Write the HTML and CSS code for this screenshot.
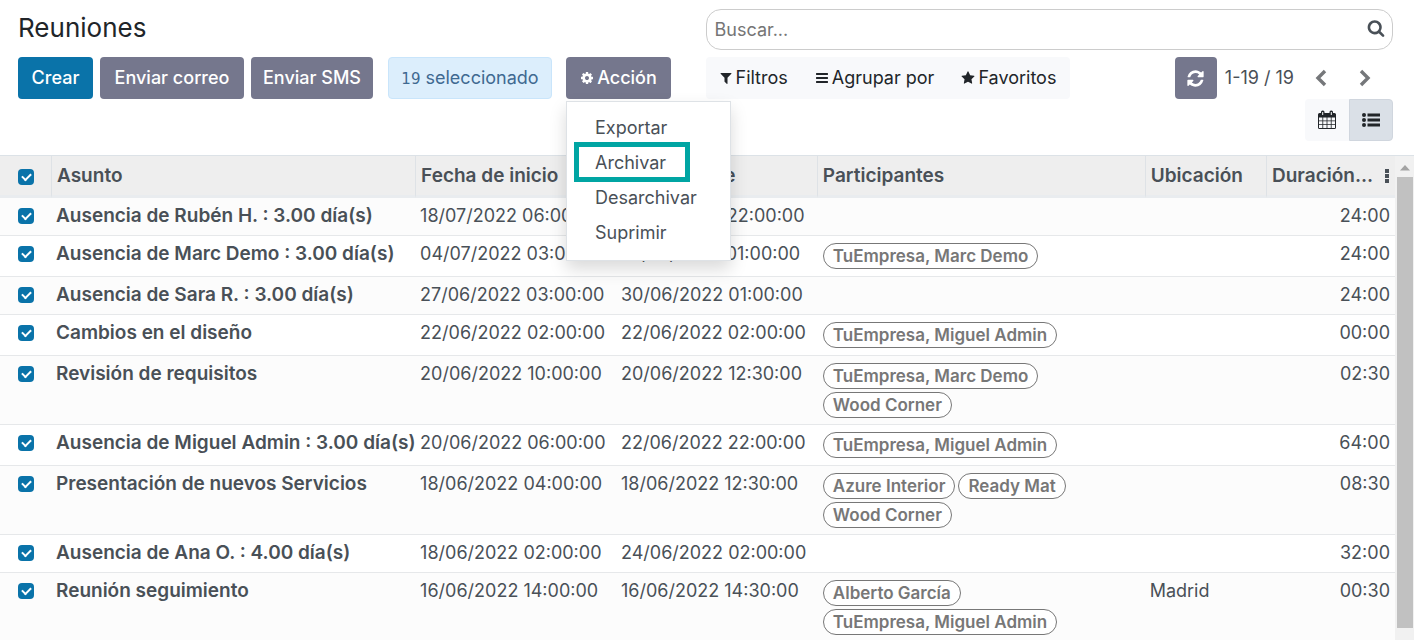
FILE: index.html
```
<!DOCTYPE html>
<html lang="es">
<head>
<meta charset="utf-8">
<meta name="viewport" content="width=device-width, initial-scale=1">
<title>Reuniones</title>
<link rel="stylesheet" href="styles.css">
</head>
<body>
<header class="control-panel">
  <div class="panel-left">
    <h1 class="title">Reuniones</h1>
    <div class="actions">
      <button class="btn btn-primary btn-create" type="button">Crear</button>
      <button class="btn btn-secondary btn-mail" type="button">Enviar correo</button>
      <button class="btn btn-secondary btn-sms" type="button">Enviar SMS</button>
      <span class="selection"><span class="selection-count">19</span> seleccionado</span>
      <div class="dropdown">
        <button class="btn btn-secondary btn-action" type="button" aria-expanded="true">
          <svg class="icon-small" viewBox="0 0 1792 1792" aria-hidden="true"><path fill="currentColor" d="M1152 896q0-106-75-181t-181-75-181 75-75 181 75 181 181 75 181-75 75-181zm512-109v222q0 12-8 23t-20 13l-185 28q-19 54-39 91 35 50 107 138 10 12 10 25t-9 23q-27 37-99 108t-94 71q-12 0-26-9l-138-108q-44 23-91 38-16 136-29 186-7 28-36 28H785q-14 0-24.500-8.500T749 1634l-28-184q-49-16-90-37l-141 107q-10 9-25 9-14 0-25-11-126-114-165-168-7-10-7-23 0-12 8-23 15-21 51-66.500t54-70.500q-27-50-41-99l-183-27q-13-2-21-12.500t-8-23.500V783q0-12 8-23t19-13l186-28q14-46 39-92-40-57-107-138-10-12-10-24 0-10 9-23 26-36 98.500-107.500T465 263q13 0 26 10l138 107q44-23 91-38 16-136 29-186 7-28 36-28h222q14 0 24.500 8.500T1043 158l28 184q49 16 90 37l142-107q9-9 24-9 13 0 25 10 129 119 165 170 7 8 7 22 0 12-8 23-15 21-51 66.500t-54 70.500q26 50 41 98l183 28q13 2 21 12.500t8 23.500z"/></svg>
          Acción
        </button>
        <div class="menu">
          <button class="menu-item" type="button">Exportar</button>
          <button class="menu-item menu-item-marked" type="button">Archivar</button>
          <button class="menu-item" type="button">Desarchivar</button>
          <button class="menu-item" type="button">Suprimir</button>
        </div>
      </div>
    </div>
  </div>
  <div class="panel-right">
    <div class="search">
      <input class="search-input" type="text" placeholder="Buscar..." aria-label="Buscar">
      <svg class="search-icon" viewBox="0 0 1792 1792" aria-hidden="true"><path fill="currentColor" d="M1216 832q0-185-131.500-316.500T768 384 451.500 515.500 320 832t131.500 316.500T768 1280t316.500-131.500T1216 832zm512 832q0 52-38 90t-90 38q-54 0-90-38l-343-342q-179 124-399 124-143 0-273.500-55.500t-225-150-150-225T64 832t55.500-273.500 150-225 225-150T768 128t273.500 55.500 225 150 150 225T1472 832q0 220-124 399l343 343q37 37 37 90z"/></svg>
    </div>
    <div class="tools">
      <div class="filters">
        <button class="filter" type="button">
          <svg class="icon-small" viewBox="0 0 1792 1792" aria-hidden="true"><path fill="currentColor" d="M1595 295q17 41-14 70l-493 493v742q0 42-39 59-13 5-25 5-27 0-45-19l-256-256q-19-19-19-45V858L211 365q-31-29-14-70 17-39 59-39h1280q42 0 59 39z"/></svg>
          Filtros
        </button>
        <button class="filter" type="button">
          <svg class="icon-small" viewBox="0 0 1792 1792" aria-hidden="true"><path fill="currentColor" d="M1664 1344v128q0 26-19 45t-45 19H192q-26 0-45-19t-19-45v-128q0-26 19-45t45-19h1408q26 0 45 19t19 45zm0-512v128q0 26-19 45t-45 19H192q-26 0-45-19t-19-45V832q0-26 19-45t45-19h1408q26 0 45 19t19 45zm0-512v128q0 26-19 45t-45 19H192q-26 0-45-19t-19-45V320q0-26 19-45t45-19h1408q26 0 45 19t19 45z"/></svg>
          Agrupar por
        </button>
        <button class="filter" type="button">
          <svg class="icon-small" viewBox="0 0 1792 1792" aria-hidden="true"><path fill="currentColor" d="M1728 647q0 22-26 48l-363 354 86 500q1 7 1 20 0 21-10.500 35.500T1385 1619q-19 0-40-12l-449-236-449 236q-22 12-40 12-21 0-31.500-14.500T365 1569q0-6 2-20l86-500L89 695q-25-27-25-48 0-37 56-46l502-73L847 73q19-41 49-41t49 41l225 455 502 73q56 9 56 46z"/></svg>
          Favoritos
        </button>
      </div>
      <div class="paging">
        <button class="btn btn-secondary btn-refresh" type="button" aria-label="Actualizar">
          <svg class="icon-refresh" viewBox="0 0 1792 1792" aria-hidden="true"><path fill="currentColor" d="M1639 1056q0 5-1 7-64 268-268 434.500T892 1664q-146 0-282.500-55T366 1452l-129 129q-19 19-45 19t-45-19-19-45v-448q0-26 19-45t45-19h448q26 0 45 19t19 45-19 45l-137 137q71 66 161 102t187 36q134 0 250-65t186-179q11-17 53-117 8-23 30-23h192q13 0 22.500 9.500t9.500 22.500zm25-800v448q0 26-19 45t-45 19h-448q-26 0-45-19t-19-45 19-45l138-138Q1097 384 896 384q-134 0-250 65T460 628q-11 17-53 117-8 23-30 23H178q-13 0-22.500-9.500T146 736v-7q65-268 270-434.500T896 128q146 0 284 55.500T1425 340l130-129q19-19 45-19t45 19 19 45z"/></svg>
        </button>
        <span class="range">1-19 / 19</span>
        <button class="page-btn" type="button" aria-label="Anterior"><svg class="icon-chevron" viewBox="0 0 18 18" aria-hidden="true"><path d="M13 2 6 9l7 7" fill="none" stroke="currentColor" stroke-width="3.400"/></svg></button>
        <button class="page-btn" type="button" aria-label="Siguiente"><svg class="icon-chevron" viewBox="0 0 18 18" aria-hidden="true"><path d="m5 2 7 7-7 7" fill="none" stroke="currentColor" stroke-width="3.400"/></svg></button>
      </div>
    </div>
    <div class="views">
      <button class="view view-calendar" type="button" aria-label="Calendario">
        <svg class="icon-view" viewBox="0 0 20 20" aria-hidden="true"><path fill="currentColor" fill-rule="evenodd" d="M2.500 3H4V2a1.500 1.500 0 0 1 1.500-1.500h.5A1.500 1.500 0 0 1 7.500 2v1h5V2A1.500 1.500 0 0 1 14 .5h.5A1.500 1.500 0 0 1 16 2v1h1.500A1.500 1.500 0 0 1 19 4.500v13A1.500 1.500 0 0 1 17.500 19h-15A1.500 1.500 0 0 1 1 17.500v-13A1.500 1.500 0 0 1 2.500 3zM5.200 2v3h1V2zm8.600 0v3h1V2zM2 7.500v3h3.400v-3zm4.200 0v3h3.400v-3zm4.200 0v3h3.400v-3zm4.200 0v3H18v-3zM2 11.300v2.900h3.400v-2.900zm4.200 0v2.900h3.400v-2.900zm4.200 0v2.900h3.400v-2.900zm4.200 0v2.900H18v-2.900zM2 15v3h3.400v-3zm4.200 0v3h3.400v-3zm4.200 0v3h3.400v-3zm4.200 0v3H18v-3z"/></svg>
      </button>
      <button class="view view-list" type="button" aria-label="Lista" aria-pressed="true">
        <svg class="icon-view" viewBox="0 0 20 20" aria-hidden="true"><g fill="currentColor"><circle cx="3" cy="5" r="2"/><circle cx="3" cy="10" r="2"/><circle cx="3" cy="15" r="2"/><path d="M6.500 3.500H19v3H6.500zM6.500 8.500H19v3H6.500zM6.500 13.500H19v3H6.500z"/></g></svg>
      </button>
    </div>
  </div>
</header>

<main class="content">
  <div class="table-wrap">
    <table class="list">
      <colgroup><col class="col-check"><col class="col-subject"><col class="col-start"><col class="col-end"><col class="col-people"><col class="col-place"><col class="col-duration"></colgroup>
      <thead>
        <tr>
          <th class="check-cell"><input class="check" type="checkbox" checked aria-label="Seleccionar todo"></th>
          <th>Asunto</th>
          <th>Fecha de inicio</th>
          <th>Fecha cierre</th>
          <th>Participantes</th>
          <th>Ubicación</th>
          <th><div class="duration-head"><span>Duración...</span><button class="options" type="button" aria-label="Columnas opcionales"><svg class="icon-dots" viewBox="0 0 4 16" aria-hidden="true"><path fill="currentColor" d="M0 1h4v4H0zM0 6h4v4H0zM0 11h4v4H0z"/></svg></button></div></th>
        </tr>
      </thead>
      <tbody>
        <tr>
          <td class="check-cell"><input class="check" type="checkbox" checked aria-label="Ausencia de Rubén H."></td>
          <td class="subject">Ausencia de Rubén H. : 3.00 día(s)</td><td>18/07/2022 06:00:00</td><td>20/07/2022 22:00:00</td><td></td><td></td><td class="duration">24:00</td>
        </tr>
        <tr>
          <td class="check-cell"><input class="check" type="checkbox" checked aria-label="Ausencia de Marc Demo"></td>
          <td class="subject">Ausencia de Marc Demo : 3.00 día(s)</td><td>04/07/2022 03:00:00</td><td>07/07/2022 01:00:00</td>
          <td><div class="tags"><span class="tag">TuEmpresa, Marc Demo</span></div></td><td></td><td class="duration">24:00</td>
        </tr>
        <tr>
          <td class="check-cell"><input class="check" type="checkbox" checked aria-label="Ausencia de Sara R."></td>
          <td class="subject">Ausencia de Sara R. : 3.00 día(s)</td><td>27/06/2022 03:00:00</td><td>30/06/2022 01:00:00</td><td></td><td></td><td class="duration">24:00</td>
        </tr>
        <tr>
          <td class="check-cell"><input class="check" type="checkbox" checked aria-label="Cambios en el diseño"></td>
          <td class="subject">Cambios en el diseño</td><td>22/06/2022 02:00:00</td><td>22/06/2022 02:00:00</td>
          <td><div class="tags"><span class="tag">TuEmpresa, Miguel Admin</span></div></td><td></td><td class="duration">00:00</td>
        </tr>
        <tr>
          <td class="check-cell"><input class="check" type="checkbox" checked aria-label="Revisión de requisitos"></td>
          <td class="subject">Revisión de requisitos</td><td>20/06/2022 10:00:00</td><td>20/06/2022 12:30:00</td>
          <td><div class="tags"><span class="tag">TuEmpresa, Marc Demo</span><span class="tag">Wood Corner</span></div></td><td></td><td class="duration">02:30</td>
        </tr>
        <tr>
          <td class="check-cell"><input class="check" type="checkbox" checked aria-label="Ausencia de Miguel Admin"></td>
          <td class="subject">Ausencia de Miguel Admin : 3.00 día(s)</td><td>20/06/2022 06:00:00</td><td>22/06/2022 22:00:00</td>
          <td><div class="tags"><span class="tag">TuEmpresa, Miguel Admin</span></div></td><td></td><td class="duration">64:00</td>
        </tr>
        <tr>
          <td class="check-cell"><input class="check" type="checkbox" checked aria-label="Presentación de nuevos Servicios"></td>
          <td class="subject">Presentación de nuevos Servicios</td><td>18/06/2022 04:00:00</td><td>18/06/2022 12:30:00</td>
          <td><div class="tags"><span class="tag">Azure Interior</span><span class="tag">Ready Mat</span><span class="tag">Wood Corner</span></div></td><td></td><td class="duration">08:30</td>
        </tr>
        <tr>
          <td class="check-cell"><input class="check" type="checkbox" checked aria-label="Ausencia de Ana O."></td>
          <td class="subject">Ausencia de Ana O. : 4.00 día(s)</td><td>18/06/2022 02:00:00</td><td>24/06/2022 02:00:00</td><td></td><td></td><td class="duration">32:00</td>
        </tr>
        <tr>
          <td class="check-cell"><input class="check" type="checkbox" checked aria-label="Reunión seguimiento"></td>
          <td class="subject">Reunión seguimiento</td><td>16/06/2022 14:00:00</td><td>16/06/2022 14:30:00</td>
          <td><div class="tags"><span class="tag">Alberto García</span><span class="tag">TuEmpresa, Miguel Admin</span></div></td><td>Madrid</td><td class="duration">00:30</td>
        </tr>
      </tbody>
    </table>
  </div>
  <div class="scrollbar" aria-hidden="true">
    <svg class="scroll-arrow" viewBox="0 0 10 6"><path fill="#a3a3a3" d="M0 5.500 5 0l5 5.500z"/></svg>
    <div class="scroll-thumb"></div>
  </div>
</main>
</body>
</html>
```

FILE: styles.css
```
* { box-sizing: border-box; }

body {
  margin: 0;
  height: 100vh;
  display: flex;
  flex-direction: column;
  overflow: hidden;
  background: #fff;
  color: #495057;
  font-family: Inter, "Open Sans", sans-serif;
  font-size: 18px;
  line-height: 26px;
}

button, input { font: inherit; color: inherit; }
button { border: 0; background: none; padding: 0; white-space: nowrap; }
svg { display: block; flex: none; }

/* Control panel */
.control-panel {
  display: grid;
  grid-template-columns: 1fr 1fr;
  padding: 9px 21px 14px 18px;
}
.title {
  margin: 0 0 7px;
  height: 41px;
  color: #212529;
  font-size: 26px;
  font-weight: 400;
  line-height: 37px;
}
.actions { display: flex; gap: 7px; }
.btn {
  height: 42px;
  border-radius: 4px;
  padding: 0 12px;
  color: #fff;
  font-weight: 500;
}
.btn-primary { background: #0a73a9; }
.btn-secondary { background: #75778d; }
.btn-create { min-width: 75px; }
.btn-mail { min-width: 144px; }
.btn-sms { min-width: 122px; }
.selection {
  min-width: 164px;
  height: 42px;
  margin: 0 7px 0 8px;
  padding: 0 9px;
  border: 1px solid #c9e5fb;
  border-radius: 4px;
  background: #dceefc;
  color: #3f6991;
  line-height: 40px;
  text-align: center;
  white-space: nowrap;
}
.selection-count { font-family: "DejaVu Sans", sans-serif; font-size: 15px; }
.dropdown { position: relative; }
.btn-action { display: flex; align-items: center; justify-content: center; gap: 3px; min-width: 105px; }
.icon-small { width: 14px; height: 14px; }

.menu {
  position: absolute;
  z-index: 2;
  top: 44px;
  left: 0;
  width: 165px;
  padding: 9px 0;
  border: 1px solid #dee2e6;
  background: #fff;
  box-shadow: 0 8px 16px rgba(0, 0, 0, 0.15);
}
.menu-item {
  display: block;
  position: relative;
  width: 100%;
  height: 35px;
  padding: 0 28px 1px;
  text-align: left;
}
.menu-item-marked::after {
  content: "";
  position: absolute;
  inset: -4px 40px -1px 7px;
  border: 5px solid #00a5a3;
}

/* Search */
.search {
  display: flex;
  align-items: center;
  height: 41px;
  margin-bottom: 7px;
  padding: 0 7px 0 8px;
  border: 1px solid #ccc;
  border-radius: 15px;
}
.search-input { flex: 1; min-width: 0; padding: 0; border: 0; outline: 0; background: none; }
.search-input::placeholder { color: #757575; opacity: 1; }
.search-icon { width: 18px; height: 18px; margin-bottom: 4px; }

.tools { display: flex; justify-content: space-between; }
.filters {
  display: flex;
  height: 42px;
  border-radius: 4px;
  background: #f8f9fb;
  color: #212529;
}
.filter { display: flex; align-items: center; gap: 3px; padding: 0 14px 0 13px; }
.paging { display: flex; align-items: center; padding-right: 6px; }
.btn-refresh { display: grid; place-items: center; width: 42px; padding: 0; }
.icon-refresh { width: 19px; height: 19px; }
.range { margin: 0 5px 0 8px; white-space: nowrap; }
.page-btn { display: grid; place-items: center; width: 44px; height: 42px; color: #75777a; }
.icon-chevron { width: 18px; height: 18px; }

.views { display: flex; justify-content: flex-end; color: #212529; }
.view { display: grid; place-items: center; width: 44px; height: 42px; }
.view-calendar { border-radius: 4px 0 0 4px; background: #f8f9fb; }
.view-list { border: 1px solid #d0d6de; border-radius: 0 4px 4px 0; background: #dae0e7; }
.icon-view { width: 20px; height: 20px; }

/* List */
.content { flex: 1; min-height: 0; display: flex; border-top: 1px solid #dce2e7; }
.table-wrap { flex: 1; min-width: 0; overflow: hidden; }
.list { width: 100%; table-layout: fixed; border-collapse: separate; border-spacing: 0; }
.col-check { width: 52px; }
.col-subject { width: 26.1%; }
.col-start { width: 14.4%; }
.col-end { width: 14.4%; }
.col-people { width: 23.5%; }
.col-place { width: 8.7%; }
.list th {
  height: 42px;
  padding: 0 6px 0 5px;
  border-right: 1px solid #dee2e6;
  border-bottom: 3px solid #e9ecef;
  background: #eee;
  font-size: 19px;
  font-weight: 600;
  text-align: left;
  white-space: nowrap;
}
.list th:last-child { border-right: 0; }
.list td {
  padding: 5px 5px 6px 4px;
  border-bottom: 1px solid #e6e8ea;
  vertical-align: top;
  white-space: nowrap;
}
.list tbody tr:nth-child(odd) { background: #fcfcfc; }
.list .check-cell { padding-left: 18px; }
.list .subject { font-size: 19px; font-weight: 600; }
.list .duration { text-align: right; }
.duration-head { display: flex; align-items: center; justify-content: space-between; }
.options { color: #495057; }
.icon-dots { width: 4px; height: 16px; }

.check {
  appearance: none;
  display: grid;
  place-items: center;
  width: 16px;
  height: 16px;
  margin: 5px 0 0;
  border-radius: 4px;
  background: #0a73a9;
}
.list th .check { margin-top: 2px; }
.check::before {
  content: "";
  width: 7px;
  height: 4px;
  margin-bottom: 2px;
  border: solid #fff;
  border-width: 0 0 2px 2px;
  transform: rotate(-45deg);
}

.tags { display: flex; flex-wrap: wrap; gap: 3px; padding: 2px 60px 0 1px; }
.tag {
  height: 26px;
  padding: 0 9px;
  border: 1px solid #777;
  border-radius: 13px;
  background: #fff;
  color: #777;
  font-size: 17px;
  font-weight: 600;
  line-height: 24px;
}
.tag:only-child { margin-bottom: 1px; }

.scrollbar { width: 19px; padding: 9px 1px 12px 2px; display: flex; flex-direction: column; background: #f1f1f1; }
.scroll-arrow { width: 10px; height: 6px; margin: 0 auto 6px; }
.scroll-thumb { flex: 1; background: #c1c1c1; }
```
